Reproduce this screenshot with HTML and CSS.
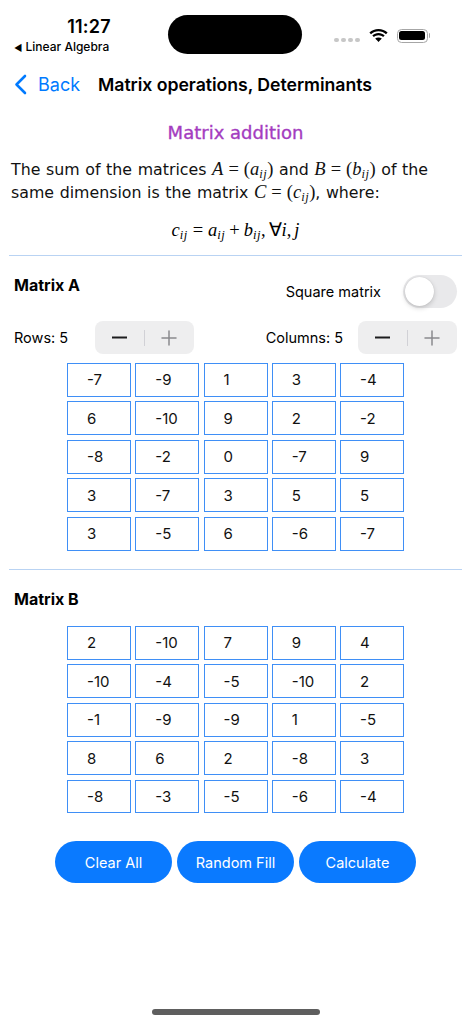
FILE: index.html
```html
<!DOCTYPE html>
<html>
<head>
<meta charset="utf-8">
<link rel="stylesheet" href="styles.css">
</head>
<body>
<div class="screen">
  <div class="status">
    <div class="status-left">
      <div class="time">11:27</div>
      <div class="back-app"><span class="tri">◀</span> Linear Algebra</div>
    </div>
    <div class="island"></div>
    <div class="status-right">
      <div class="dots"><i></i><i></i><i></i><i></i></div>
      <svg class="wifi" width="21" height="15" viewBox="0 0 21 15">
        <path d="M10.5 3.2c2.9 0 5.5 1.1 7.5 3l1.6-1.6C17.2 2.3 14 1 10.5 1S3.8 2.3 1.4 4.6L3 6.2c2-1.9 4.6-3 7.5-3z" fill="#000"/>
        <path d="M10.5 7.3c1.8 0 3.4.7 4.6 1.8l1.6-1.6c-1.6-1.5-3.8-2.4-6.2-2.4S5.9 6 4.3 7.5l1.6 1.6c1.2-1.1 2.8-1.8 4.6-1.8z" fill="#000"/>
        <path d="M10.5 11.3c.7 0 1.300.3 1.800.7l-1.8 2-1.8-2c.5-.4 1.1-.7 1.8-.7z M7.2 10.6l1.3 1.4c.6-.5 1.3-.7 2-.7s1.4.2 2 .7l1.3-1.4c-.9-.8-2-1.2-3.3-1.2s-2.4.4-3.3 1.2z" fill="#000"/>
      </svg>
      <div class="battery"><div class="level"></div></div>
      <div class="nub"></div>
    </div>
  </div>

  <div class="nav">
    <div class="back">
      <svg width="13" height="21" viewBox="0 0 13 21"><path d="M11 2 L2.5 10.5 L11 19" fill="none" stroke="#007aff" stroke-width="2.6" stroke-linecap="round" stroke-linejoin="round"/></svg>
      <span>Back</span>
    </div>
    <div class="title">Matrix operations, Determinants</div>
  </div>

  <main class="content">
    <h1 class="heading">Matrix addition</h1>
    <p class="desc">The sum of the matrices <span class="m"><i>A</i><span class="rel">=</span>(<i>a</i><sub>ij</sub>)</span> and <span class="m"><i>B</i><span class="rel">=</span>(<i>b</i><sub>ij</sub>)</span> of the same dimension is the matrix <span class="m"><i>C</i><span class="rel">=</span>(<i>c</i><sub>ij</sub>)</span>, where:</p>
    <div class="formula m"><i>c</i><sub>ij</sub><span class="rel">=</span><i>a</i><sub>ij</sub><span class="bin">+</span><i>b</i><sub>ij</sub>,<span class="thin"></span>∀<i>i</i>,<span class="thin"></span><i>j</i></div>
    <div class="rule"></div>

    <section class="matrix-a">
      <div class="head-row">
        <div class="mtitle">Matrix A</div>
        <div class="square">
          <span>Square matrix</span>
          <div class="switch"><div class="knob"></div></div>
        </div>
      </div>
      <div class="dims">
        <div class="dim">
          <span class="dlabel">Rows: 5</span>
          <div class="stepper">
            <svg width="15" height="15" viewBox="0 0 15 15"><path d="M0.5 7.5H14.5" stroke="#1c1c1e" stroke-width="2" stroke-linecap="round"/></svg>
            <span class="sep"></span>
            <svg width="16" height="16" viewBox="0 0 16 16"><path d="M1 8H15M8 1V15" stroke="#8a8a8e" stroke-width="1.5" stroke-linecap="round"/></svg>
          </div>
        </div>
        <div class="dim">
          <span class="dlabel">Columns: 5</span>
          <div class="stepper">
            <svg width="15" height="15" viewBox="0 0 15 15"><path d="M0.5 7.5H14.5" stroke="#1c1c1e" stroke-width="2" stroke-linecap="round"/></svg>
            <span class="sep"></span>
            <svg width="16" height="16" viewBox="0 0 16 16"><path d="M1 8H15M8 1V15" stroke="#8a8a8e" stroke-width="1.5" stroke-linecap="round"/></svg>
          </div>
        </div>
      </div>
      <div class="grid">
        <div class="cell">-7</div><div class="cell">-9</div><div class="cell">1</div><div class="cell">3</div><div class="cell">-4</div>
        <div class="cell">6</div><div class="cell">-10</div><div class="cell">9</div><div class="cell">2</div><div class="cell">-2</div>
        <div class="cell">-8</div><div class="cell">-2</div><div class="cell">0</div><div class="cell">-7</div><div class="cell">9</div>
        <div class="cell">3</div><div class="cell">-7</div><div class="cell">3</div><div class="cell">5</div><div class="cell">5</div>
        <div class="cell">3</div><div class="cell">-5</div><div class="cell">6</div><div class="cell">-6</div><div class="cell">-7</div>
      </div>
    </section>

    <div class="rule rule2"></div>

    <section class="matrix-b">
      <div class="mtitle">Matrix B</div>
      <div class="grid">
        <div class="cell">2</div><div class="cell">-10</div><div class="cell">7</div><div class="cell">9</div><div class="cell">4</div>
        <div class="cell">-10</div><div class="cell">-4</div><div class="cell">-5</div><div class="cell">-10</div><div class="cell">2</div>
        <div class="cell">-1</div><div class="cell">-9</div><div class="cell">-9</div><div class="cell">1</div><div class="cell">-5</div>
        <div class="cell">8</div><div class="cell">6</div><div class="cell">2</div><div class="cell">-8</div><div class="cell">3</div>
        <div class="cell">-8</div><div class="cell">-3</div><div class="cell">-5</div><div class="cell">-6</div><div class="cell">-4</div>
      </div>
    </section>

    <div class="actions">
      <button class="btn">Clear All</button>
      <button class="btn">Random Fill</button>
      <button class="btn">Calculate</button>
    </div>
  </main>
  <div class="home"></div>
</div>
</body>
</html>
```

FILE: styles.css
```css
* { box-sizing: border-box; }
html, body { margin: 0; padding: 0; background: #fff; }
body { font-family: Inter, "Noto Sans", sans-serif; color: #000; }
.screen { width: 471px; height: 1024px; position: relative; overflow: hidden; }

.status { display: flex; height: 62px; }
.status-left { width: 164px; padding-left: 14px; padding-top: 17px; }
.time { width: 150px; text-align: center; font-size: 18px; font-weight: 600; line-height: 20px; letter-spacing: 0.2px; }
.back-app { margin-top: 3px; font-size: 12px; line-height: 14px; font-weight: 500; }
.tri { font-size: 9px; }
.island { width: 134px; height: 39px; margin-top: 15px; margin-left: 4px; background: #000; border-radius: 20px; }
.status-right { display: flex; align-items: center; height: 15px; margin-top: 28px; margin-left: 32px; }
.dots { display: flex; gap: 2.5px; margin-top: 9px; }
.dots i { width: 4.5px; height: 4.5px; border-radius: 50%; background: #c7c7c7; display: block; }
.wifi { margin-left: 8px; }
.battery { margin-left: 8px; width: 31px; height: 14px; border: 1.3px solid #a6a6a6; border-radius: 4.5px; padding: 1.6px; }
.level { width: 100%; height: 100%; background: #000; border-radius: 2.5px; }
.nub { width: 1.6px; height: 5px; background: #a6a6a6; border-radius: 0 1px 1px 0; margin-left: 1px; }

.nav { display: flex; align-items: center; height: 44px; padding-left: 14px; }
.back { display: flex; align-items: center; color: #007aff; font-size: 18px; }
.back svg { margin-right: 11px; }
.title { margin-left: 18px; font-size: 17.7px; font-weight: 600; letter-spacing: -0.05px; }

.content { padding: 0 9px; }
.heading { margin: 15px 0 0; text-align: center; font-family: "DejaVu Sans", Verdana, sans-serif; font-weight: 400; font-size: 18px; line-height: 24px; color: #a43cc0; -webkit-text-stroke: 0.35px #a43cc0; }
.desc { margin: 13px 0 0; padding-left: 2px; font-family: "DejaVu Sans", Verdana, sans-serif; font-size: 15.8px; line-height: 22px; color: #111; word-spacing: 0.6px; }
.m { font-family: "Liberation Serif", "Times New Roman", serif; font-size: 18.5px; word-spacing: 0; }
.m i { font-style: italic; }
.m sub { font-size: 12.5px; font-style: italic; vertical-align: -3px; line-height: 0; letter-spacing: 0.5px; }
.rel { margin: 0 5px; }
.bin { margin: 0 4px; }
.thin { display: inline-block; width: 3px; }
.formula { text-align: center; margin-top: 15px; line-height: 22px; }
.rule { height: 1px; background: #b9d3f3; margin-top: 14px; }

.matrix-a { padding: 0 5px; }
.head-row { display: flex; justify-content: space-between; align-items: flex-start; margin-top: 16px; }
.mtitle { font-size: 16px; font-weight: 700; line-height: 20px; margin-top: 3px; }
.square { display: flex; align-items: center; margin-top: 3px; }
.square span { font-size: 14.5px; margin-right: 22px; }
.switch { width: 54px; height: 33px; border-radius: 17px; background: #e9e9eb; padding: 2px; }
.knob { width: 29px; height: 29px; border-radius: 50%; background: #fff; box-shadow: 0 2px 5px rgba(0,0,0,0.18), 0 0 1px rgba(0,0,0,0.15); }

.dims { display: flex; justify-content: space-between; margin-top: 13px; }
.dim { display: flex; align-items: center; }
.dlabel { font-size: 14.5px; }
.dim:first-child .dlabel { width: 81px; }
.dim:last-child .dlabel { margin-right: 15px; }
.stepper { display: flex; align-items: center; justify-content: space-between; width: 99px; height: 33px; border-radius: 8px; background: #eeeeef; padding: 0 17px; }
.sep { width: 1px; height: 16px; background: #d1d1d6; }

.grid { display: grid; grid-template-columns: repeat(5, 64px); grid-auto-rows: 33.8px; column-gap: 4.25px; row-gap: 4.7px; width: 337px; margin: 9px auto 0; }
.cell { border: 1.6px solid #3f8ff6; display: flex; align-items: center; padding-left: 19px; font-size: 15px; color: #111; }

.rule2 { margin-top: 18px; }
.matrix-b { padding: 0 5px; }
.matrix-b .mtitle { margin-top: 19px; }
.matrix-b .grid { margin-top: 17px; }

.actions { display: flex; justify-content: center; gap: 5px; margin-top: 28px; }
.btn { width: 117px; height: 42px; border: none; border-radius: 21px; background: #0a7aff; color: #fff; font-family: Inter, "Noto Sans", sans-serif; font-size: 14.5px; padding: 0; }

.home { position: absolute; left: 152px; top: 1009px; width: 168px; height: 6px; border-radius: 3px; background: #5e5e5e; }
```
